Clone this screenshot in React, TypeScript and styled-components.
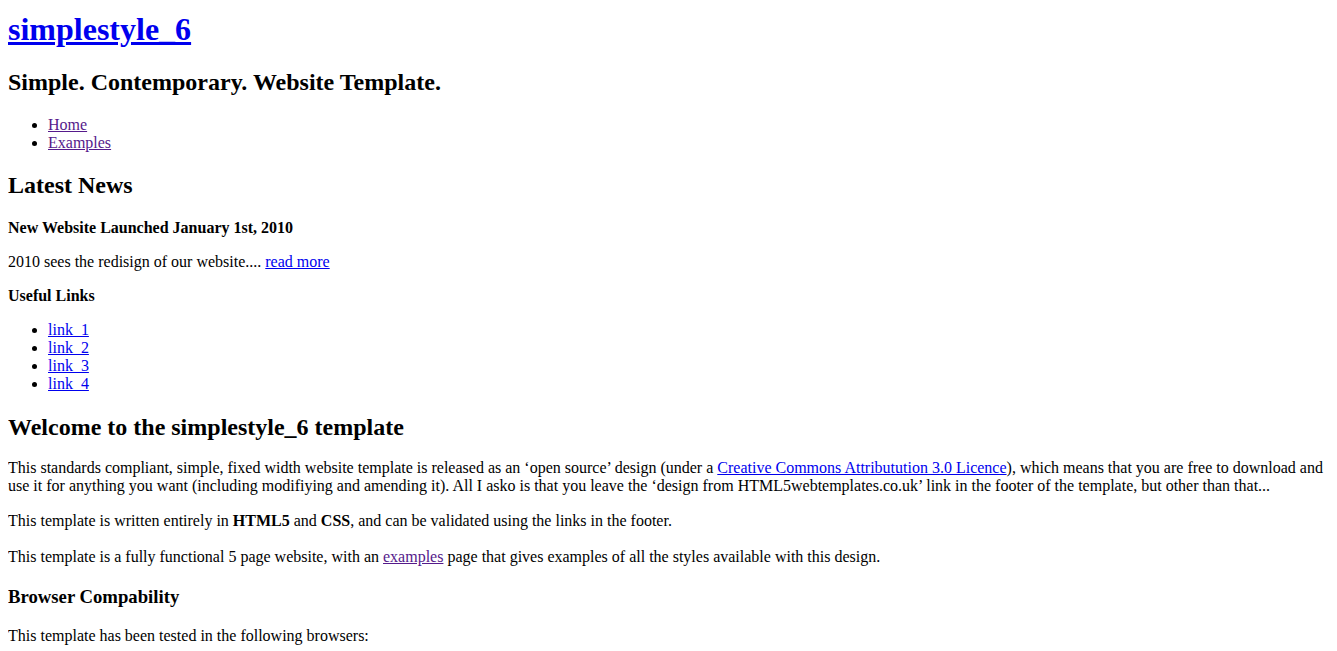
import React from "react";
import styled, { createGlobalStyle } from "styled-components";

const Global = createGlobalStyle`
  html, body { background: #fff; }
  body {
    margin: 8px;
    font-family: "Liberation Serif", "Times New Roman", serif;
    font-size: 16px;
    color: #000;
  }
`;

const Page = styled.div`
  display: block;
`;

const Header = styled.header`
  display: block;
`;

const Sidebar = styled.aside`
  display: block;
`;

const Content = styled.main`
  display: block;
`;

const SiteTitle = styled.h1`
  font-size: 32px;
  font-weight: bold;
  margin: 3px 0 21.44px;
`;

const Heading = styled.h2<{ $top?: number; $bottom?: number }>`
  font-size: 24px;
  font-weight: bold;
  margin: ${(p) => (p.$top ?? 19.92)}px 0 ${(p) => (p.$bottom ?? 19.92)}px;
`;

const SubHeading = styled.h3`
  font-size: 18.72px;
  font-weight: bold;
  margin: 19.8px 0;
`;

const SmallHeading = styled.h4`
  font-size: 16px;
  font-weight: bold;
  margin: 16px 0;
`;

const Para = styled.p<{ $gap?: number }>`
  margin: ${(p) => (p.$gap ?? 16)}px 0;
`;

const List = styled.ul`
  margin: 16px 0;
  padding-left: 40px;
  list-style: disc;
`;

const Link = styled.a<{ $visited?: boolean }>`
  color: ${(p) => (p.$visited ? "#551a8b" : "#0000ee")};
  text-decoration: underline;
  cursor: pointer;
`;

export default function App() {
  return (
    <Page>
      <Global />
      <Header>
        <SiteTitle>
          <Link href="#">simplestyle_6</Link>
        </SiteTitle>
        <Heading>Simple. Contemporary. Website Template.</Heading>
        <nav>
          <List>
            <li><Link $visited href="#">Home</Link></li>
            <li><Link $visited href="#">Examples</Link></li>
          </List>
        </nav>
      </Header>
      <Sidebar>
        <Heading>Latest News</Heading>
        <SmallHeading>New Website Launched January 1st, 2010</SmallHeading>
        <Para>
          2010 sees the redisign of our website.... <Link href="#">read more</Link>
        </Para>
        <SmallHeading>Useful Links</SmallHeading>
        <List>
          <li><Link href="#">link_1</Link></li>
          <li><Link href="#">link_2</Link></li>
          <li><Link href="#">link_3</Link></li>
          <li><Link href="#">link_4</Link></li>
        </List>
      </Sidebar>
      <Content>
        <Heading $top={20.9} $bottom={17.6}>Welcome to the simplestyle_6 template</Heading>
        <Para $gap={17.6}>
          This standards compliant, simple, fixed width website template is released as an ‘open source’ design (under a{" "}
          <Link href="#">Creative Commons Attributution 3.0 Licence</Link>), which means that you are free to download and use it for anything you want (including modifiying and amending it). All I asko is that you leave the ‘design from HTML5webtemplates.co.uk’ link in the footer of the template, but other than that...
        </Para>
        <Para $gap={17.6}>
          This template is written entirely in <b>HTML5</b> and <b>CSS</b>, and can be validated using the links in the footer.
        </Para>
        <Para $gap={17.6}>
          This template is a fully functional 5 page website, with an <Link $visited href="#">examples</Link> page that gives examples of all the styles available with this design.
        </Para>
        <SubHeading>Browser Compability</SubHeading>
        <Para $gap={17.6}>This template has been tested in the following browsers:</Para>
      </Content>
    </Page>
  );
}
